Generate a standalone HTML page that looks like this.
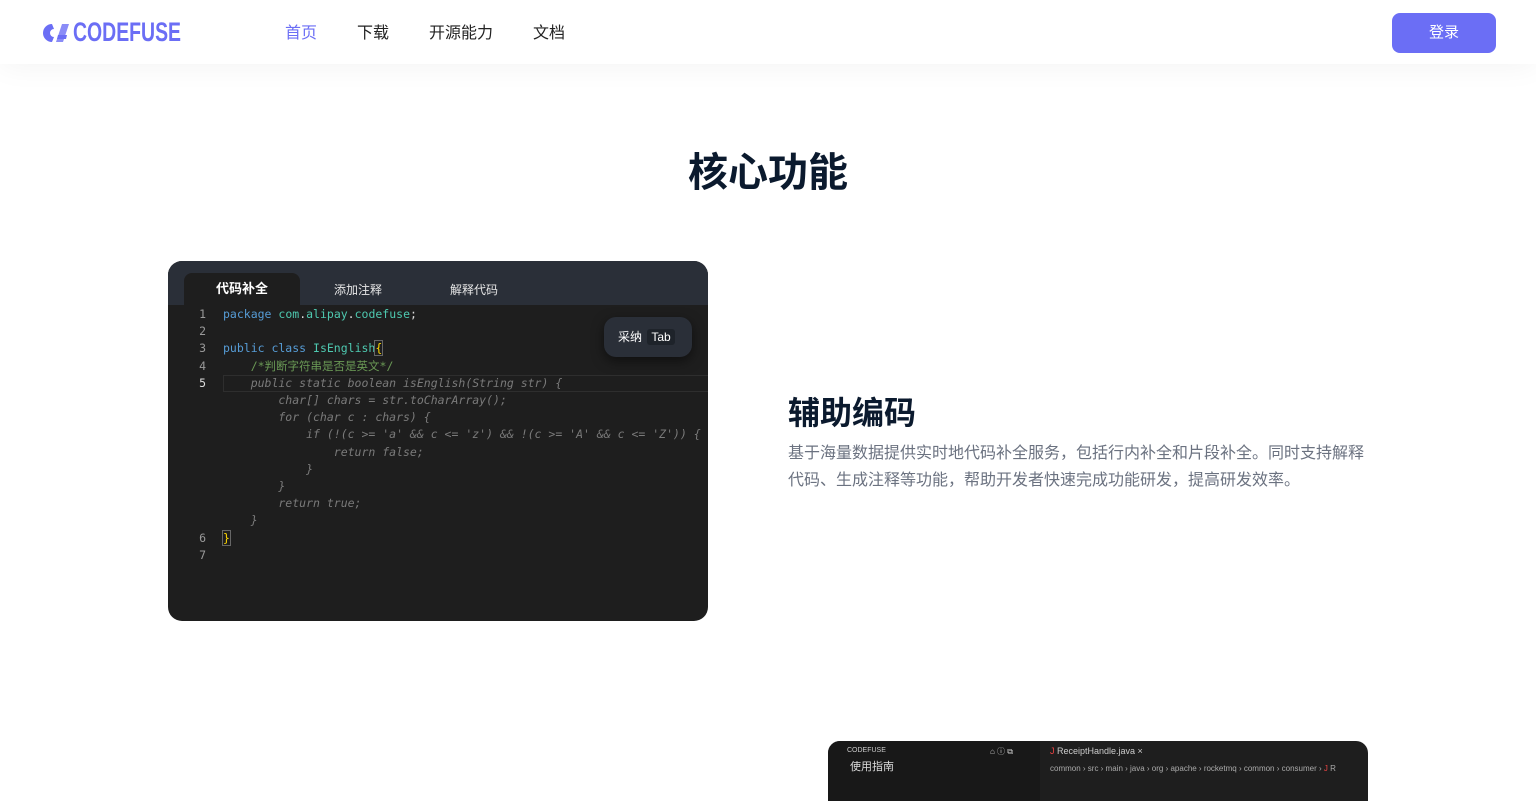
<!DOCTYPE html>
<html><head><meta charset="utf-8">
<style>
*{margin:0;padding:0;box-sizing:border-box}
body{width:1536px;height:776px;overflow:hidden;background:#fff;font-family:"Liberation Sans","Noto Sans CJK SC",sans-serif;position:relative}
.hdr{position:absolute;left:0;top:0;width:1536px;height:64px;background:#fff;box-shadow:0 2px 30px rgba(0,0,0,0.05)}
.logo{position:absolute;left:40px;top:17px;display:flex;align-items:center}
.logo span{font-weight:bold;font-size:27px;color:#6b6ef5;margin-left:3px;transform:scaleX(0.72);transform-origin:left;display:inline-block}
.nav{position:absolute;top:19px;font-size:16px;color:#222}
.btn{position:absolute;left:1392px;top:13px;width:104px;height:40px;background:#6b6ef5;border-radius:8px;color:#fff;font-size:15px;text-align:center;line-height:40px}
h1{position:absolute;left:0;width:1536px;top:140px;text-align:center;font-size:40px;color:#0b1a2e;font-weight:bold}
.ed{position:absolute;left:168px;top:261px;width:540px;height:360px;background:#1e1e1e;border-radius:14px;overflow:hidden}
.tabs{height:44px;background:#2a2f38;position:relative}
.tab{position:absolute;top:20px;font-size:12px;color:#e6e6e6}
.tab.a{left:16px;top:12px;width:116px;height:32px;background:#1e1e1e;border-radius:8px 8px 0 0;text-align:center;line-height:32px;font-weight:bold;color:#fff;font-size:13px}
.code{position:absolute;left:0;top:45px;font-family:"DejaVu Sans Mono","Noto Sans CJK SC",monospace;font-size:11.5px;line-height:17.2px;white-space:pre}
.ln{position:absolute;left:22px;width:16px;text-align:right;color:#9a9a9a}
.tx{position:absolute;left:55px}
.g{color:#7a7a7a;font-style:italic}
.tip{position:absolute;left:436px;top:56px;width:88px;height:40px;background:#2a2f38;border-radius:12px;color:#fff;font-size:12px;line-height:40px;padding-left:14px;box-shadow:0 4px 12px rgba(0,0,0,0.5)}
.tip b{font-weight:normal;background:#1e232a;padding:1px 4px;border-radius:3px;margin-left:2px}
h2{position:absolute;left:788px;top:388px;font-size:32px;color:#0b1a2e;font-weight:bold}
.p{position:absolute;left:788px;top:440px;width:590px;font-size:16px;line-height:27px;color:#6b7280}
.ed2{position:absolute;left:828px;top:741px;width:540px;height:60px;background:#1e1e1e;border-radius:12px 12px 0 0;overflow:hidden;font-size:8px;color:#ccc}
</style></head><body>
<div class="hdr">
<div class="logo"><svg width="30" height="24" viewBox="0 0 30 24"><path d="M12 3 A9 9 0 1 0 12 21 L14 16 A4 4 0 1 1 14 8 Z" fill="#6b6ef5"/><path d="M16 21 L22 3 L29 3 L23 21 Z" fill="#8a8cf7"/><path d="M18 14 L27 14 L26 18 L17 18Z" fill="#6b6ef5"/></svg><span>CODEFUSE</span></div>
<div class="nav" style="left:285px;color:#6b6ef5">首页</div>
<div class="nav" style="left:357px">下载</div>
<div class="nav" style="left:429px">开源能力</div>
<div class="nav" style="left:533px">文档</div>
<div class="btn">登录</div>
</div>
<h1>核心功能</h1>
<div class="ed">
<div class="tabs"><div class="tab a">代码补全</div><div class="tab" style="left:166px">添加注释</div><div class="tab" style="left:282px">解释代码</div></div>
<div style="position:absolute;left:55px;top:114px;width:490px;height:17px;border:1px solid #2e2e2e"></div>
<div class="code">
<div class="ln" style="top:0">1</div><div class="ln" style="top:17.2px">2</div><div class="ln" style="top:34.4px">3</div><div class="ln" style="top:51.6px">4</div><div class="ln" style="top:68.8px;color:#ddd">5</div><div class="ln" style="top:223.6px">6</div><div class="ln" style="top:240.8px">7</div>
<div class="tx" style="top:0"><span style="color:#569cd6">package</span> <span style="color:#4ec9b0">com</span><span style="color:#ddd">.</span><span style="color:#4ec9b0">alipay</span><span style="color:#ddd">.</span><span style="color:#4ec9b0">codefuse</span><span style="color:#ddd">;</span></div>
<div class="tx" style="top:34.4px"><span style="color:#569cd6">public class</span> <span style="color:#4ec9b0">IsEnglish</span><span style="color:#ffd700;outline:1px solid #666">{</span></div>
<div class="tx" style="top:51.6px;color:#6a9955">    /*判断字符串是否是英文*/</div>
<div class="tx g" style="top:68.8px">    public static boolean isEnglish(String str) {</div>
<div class="tx g" style="top:86px">        char[] chars = str.toCharArray();</div>
<div class="tx g" style="top:103.2px">        for (char c : chars) {</div>
<div class="tx g" style="top:120.4px">            if (!(c >= 'a' &amp;&amp; c &lt;= 'z') &amp;&amp; !(c >= 'A' &amp;&amp; c &lt;= 'Z')) {</div>
<div class="tx g" style="top:137.6px">                return false;</div>
<div class="tx g" style="top:154.8px">            }</div>
<div class="tx g" style="top:172px">        }</div>
<div class="tx g" style="top:189.2px">        return true;</div>
<div class="tx g" style="top:206.4px">    }</div>
<div class="tx" style="top:223.6px"><span style="color:#ffd700;outline:1px solid #666">}</span></div>
</div>
<div class="tip">采纳 <b>Tab</b></div>
</div>
<h2>辅助编码</h2>
<div class="p">基于海量数据提供实时地代码补全服务，包括行内补全和片段补全。同时支持解释代码、生成注释等功能，帮助开发者快速完成功能研发，提高研发效率。</div>
<div class="ed2">
<div style="position:absolute;left:0;top:0;width:212px;height:60px;background:#181818"></div>
<div style="position:absolute;left:19px;top:6px;font-size:7px">CODEFUSE</div>
<div style="position:absolute;left:22px;top:17px;font-size:11px;color:#ddd">使用指南</div>
<div style="position:absolute;left:162px;top:5px;font-size:8px">⌂ ⓘ ⧉</div>
<div style="position:absolute;left:222px;top:5px;font-size:9px"><span style="color:#e44">J</span> ReceiptHandle.java ×</div>
<div style="position:absolute;left:222px;top:23px;font-size:8px;color:#aaa">common › src › main › java › org › apache › rocketmq › common › consumer › <span style="color:#e44">J</span> R</div>
</div>
</body></html>
